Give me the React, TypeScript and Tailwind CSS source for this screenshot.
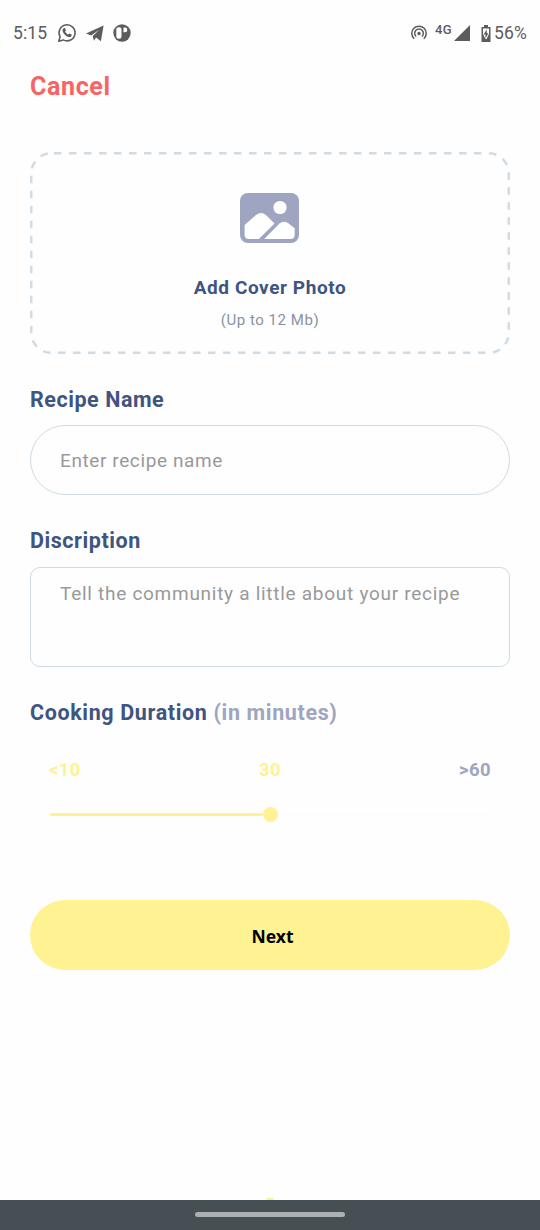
import React from "react";

function StatusBar() {
  return (
    <div className="flex h-[66px] items-center pl-[13px] pr-[13px] text-[#5c5c5c]">
      <span className="text-[17.500px] leading-5 tracking-[0.100px]">5:15</span>
      <svg className="ml-[10px] h-5 w-5" viewBox="0 0 20 20" fill="none" stroke="currentColor" strokeWidth="1.6">
        <path d="M1.800 18.200 3.100 13.800A8 8 0 1 1 6.300 16.900Z" strokeLinejoin="round" />
        <path d="M6.700 5.200 8 5l1 2.300-.9 1.300c.7 1.400 1.700 2.300 3.200 3l1.100-1.100 2.300 1.100-.3 1.600c-.7.9-1.800 1.100-3 .7-2.800-.9-4.700-2.700-5.700-5.300-.4-1.300-.2-2.600 1-3.400Z" fill="currentColor" stroke="none" />
      </svg>
      <svg className="ml-[9px] h-[18px] w-[18px]" viewBox="0 0 18 18" fill="currentColor">
        <path d="M0 9.600 17.600 1.600 14.900 17.200 10 13.600 8.100 16.800 6.600 12.300 13.200 5.800 5.200 11.400Z" />
      </svg>
      <svg className="ml-[9px] h-[18px] w-[18px]" viewBox="0 0 18 18">
        <circle cx="9" cy="9" r="8.700" fill="currentColor" />
        <rect x="3.300" y="3.300" width="5.200" height="11.400" rx="2.300" fill="white" />
        <path d="M10.500 3.600h1.500a2.300 2.300 0 0 1 0 4.600H10.500Z" fill="white" />
      </svg>
      <svg className="ml-auto h-[16px] w-[16px]" viewBox="0 0 16 16" fill="none" stroke="currentColor" strokeWidth="1.500">
        <path d="M3.200 13.700A7.200 7.200 0 1 1 12.800 13.700M5.100 11.500A4.300 4.300 0 1 1 10.900 11.500" />
        <circle cx="8" cy="8.500" r="1.700" fill="currentColor" stroke="none" />
      </svg>
      <span className="mb-[6px] ml-[8px] text-[13px] font-medium leading-4 tracking-[0.400px]">4G</span>
      <svg className="ml-[2px] h-[16px] w-[16px]" viewBox="0 0 16 16" fill="currentColor">
        <path d="M0 16 16 0V16Z" />
      </svg>
      <svg className="ml-[11px] h-[17px] w-[10px]" viewBox="0 0 10 17">
        <path d="M3 0h4v2h2.500v15H.500V2H3Z" fill="currentColor" />
        <path d="M2 3.500h6v5.500L5.500 14h-1L2 9Z" fill="white" />
        <path d="M5.800 4.500 2.500 9.500h2v3.800l3-5H5.800Z" fill="currentColor" />
      </svg>
      <span className="ml-[3px] text-[17.500px] leading-5 tracking-[0.150px]">56%</span>
    </div>
  );
}

function CoverPhoto() {
  return (
    <div className="relative mt-[49px] flex h-[202px] flex-col items-center">
      <svg className="absolute inset-0 h-full w-full" viewBox="0 0 480 202" fill="none" stroke="#d0dbe4" strokeWidth="2.500">
        <rect x="1.250" y="1.250" width="477.500" height="199.500" rx="20" strokeDasharray="7.500 7.500" strokeDashoffset="-2.750" />
      </svg>
      <svg className="mr-px mt-[41px] h-[50px] w-[59px]" viewBox="0 0 59 50">
        <rect width="59" height="50" rx="8" fill="#9fa5c0" />
        <circle cx="40" cy="14.500" r="6.600" fill="white" />
        <path d="M4.600 32 16 22Q21 18 26 22L34.500 30.500 18.800 46H9Q4.600 46 4.600 41.500Z" fill="white" />
        <path d="M24.200 46 39.500 30.500Q43.500 27.500 48 30L54.700 35.300V41.500Q54.700 46 50.500 46Z" fill="white" />
      </svg>
      <p className="mt-[33px] text-[19px] font-bold leading-6 tracking-[0.580px] text-[#3e5481]">Add Cover Photo</p>
      <p className="mt-[10px] text-[15px] leading-5 tracking-[0.550px] text-[#8b91a3]">(Up to 12 Mb)</p>
    </div>
  );
}

export default function App() {
  return (
    <div className="flex h-[1230px] w-[540px] flex-col overflow-hidden bg-[#fefefe] font-['Roboto',sans-serif]">
      <StatusBar />
      <main className="flex flex-1 flex-col px-[30px]">
        <button className="mt-[5px] self-start text-[25px] font-bold leading-8 tracking-[0.650px] text-[#f86464]">Cancel</button>
        <CoverPhoto />
        <label className="mt-[32px] text-[21.500px] font-bold leading-7 tracking-[0.550px] text-[#3e5481]">Recipe Name</label>
        <input
          className="mt-[11px] h-[70px] shrink-0 rounded-full border border-[#cddbe4] px-[29px] text-[19px] tracking-[0.600px] outline-none placeholder:text-[#999999]"
          placeholder="Enter recipe name"
        />
        <label className="mt-[32px] text-[21.500px] font-bold leading-7 tracking-[0.550px] text-[#3e5481]">Discription</label>
        <textarea
          className="mt-[12px] h-[100px] shrink-0 resize-none rounded-[10px] border border-[#cddbe4] px-[29px] pt-[14px] text-[19px] leading-6 tracking-[0.720px] outline-none placeholder:text-[#999999]"
          placeholder="Tell the community a little about your recipe"
        />
        <h2 className="mt-[32px] text-[21.500px] font-bold leading-7 tracking-[0.630px] text-[#3e5481]">
          Cooking Duration <span className="text-[#9fa5c0]">(in minutes)</span>
        </h2>
        <div className="mt-[31px] flex justify-between px-[19px] text-[18.500px] font-bold leading-6 tracking-[0.400px] text-[#fff293]">
          <span>&lt;10</span>
          <span>30</span>
          <span className="text-[#9fa5c0]">&gt;60</span>
        </div>
        <div className="mt-[24px] flex h-[16px] items-center px-[20px]">
          <div className="h-[3px] w-[212.500px] rounded-full bg-[#fff293]" />
          <div className="h-[15px] w-[15px] rounded-full bg-[#fff293]" />
          <div className="h-px flex-1 bg-[#fafafa]" />
        </div>
        <button className="mt-[78px] h-[70px] shrink-0 rounded-full bg-[#fff293] pl-[5px] pt-[3px] font-['Noto_Sans',sans-serif] text-[17.500px] font-bold text-black">
          Next
        </button>
      </main>
      <div className="mx-auto h-[2px] w-[8px] shrink-0 rounded-t-full bg-[#f6f58f]" />
      <div className="flex h-[30px] shrink-0 items-center justify-center bg-[#454f54]">
        <div className="mb-px h-[5px] w-[150px] rounded-full bg-[#acb0b3]" />
      </div>
    </div>
  );
}
